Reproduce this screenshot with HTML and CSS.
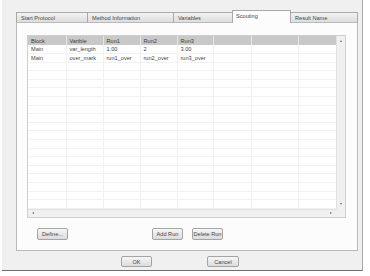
FILE: index.html
```html
<!DOCTYPE html>
<html lang="en">

<head>
  <meta charset="UTF-8" />
  <title>Scouting</title>
  <link rel="stylesheet" href="styles.css">
</head>

<body>
  <div class="dialog">
    <div class="tabs">
      <div class="tab tab-start">Start Protocol</div>
      <div class="tab tab-method">Method Information</div>
      <div class="tab tab-vars">Variables</div>
      <div class="tab tab-scout active">Scouting</div>
      <div class="tab tab-result">Result Name</div>
    </div>

    <div class="panel">
      <div class="grid-box">
        <div class="grid-view">
          <table class="grid" id="runGrid">
            <colgroup>
              <col style="width:38px">
              <col style="width:37px">
              <col style="width:37px">
              <col style="width:37px">
              <col style="width:36px">
              <col style="width:38px">
              <col style="width:47px">
              <col style="width:40px">
            </colgroup>
            <thead>
              <tr>
                <th>Block</th>
                <th>Varible</th>
                <th>Run1</th>
                <th>Run2</th>
                <th>Run3</th>
                <th></th>
                <th></th>
                <th></th>
              </tr>
            </thead>
            <tbody>
              <tr>
                <td>Main</td>
                <td>var_length</td>
                <td>1.00</td>
                <td>2</td>
                <td>3.00</td>
                <td></td>
                <td></td>
                <td></td>
              </tr>
              <tr>
                <td>Main</td>
                <td>over_mark</td>
                <td>run1_over</td>
                <td>run2_over</td>
                <td>run3_over</td>
                <td></td>
                <td></td>
                <td></td>
              </tr>
            </tbody>
          </table>
        </div>
        <div class="vscroll">
          <span class="arrow up"></span>
          <span class="arrow down"></span>
        </div>
        <div class="hscroll">
          <span class="arrow left"></span>
          <span class="arrow right"></span>
        </div>
        <div class="corner"></div>
      </div>

      <div class="panel-buttons">
        <button class="btn">Define...</button>
        <div class="run-buttons">
          <button class="btn">Add Run</button>
          <button class="btn">Delete Run</button>
        </div>
      </div>
    </div>

    <div class="footer">
      <button class="btn btn-ok">OK</button>
      <button class="btn btn-cancel">Cancel</button>
    </div>
  </div>

  <script>
    // fill the rest of the grid with empty rows
    var body = document.querySelector("#runGrid tbody");
    for (var i = 0; i < 20; i++) {
      var row = document.createElement("tr");
      for (var j = 0; j < 8; j++) {
        row.appendChild(document.createElement("td"));
      }
      body.appendChild(row);
    }
  </script>
</body>

</html>
```

FILE: styles.css
```css
body {
  margin: 0;
  background-color: #ffffff;
  font-family: "Liberation Sans", Arial, sans-serif;
  font-size: 5.6px;
  color: #444;
}

.dialog {
  width: 361px;
  height: 271px;
  margin-left: 2px;
  background-color: #f0f0f0;
  border-right: 1px solid #a8a8a8;
  border-bottom: 1px solid #6f6f6f;
  box-sizing: border-box;
  padding: 10px 0 0 14px;
}

.tabs {
  display: flex;
  align-items: flex-end;
  height: 12px;
}

.tab {
  box-sizing: border-box;
  height: 10px;
  padding: 1px 0 0 4px;
  line-height: 8px;
  background: linear-gradient(#f2f2f2, #dedede);
  border: 1px solid #a9a9a9;
  border-bottom: none;
  margin-right: -1px;
}

.tab-start {
  width: 72px;
}

.tab-method {
  width: 87px;
}

.tab-vars {
  width: 60px;
}

.tab-scout {
  width: 59px;
}

.tab-result {
  width: 68px;
}

.tab.active {
  height: 13px;
  margin-bottom: -1px;
  padding-top: 1px;
  padding-left: 3px;
  background: #fcfcfc;
  position: relative;
  z-index: 1;
}

.panel {
  box-sizing: border-box;
  width: 342px;
  height: 229px;
  background-color: #fcfcfc;
  border: 1px solid #b9b9b9;
  padding: 12px 11px 0 10px;
}

.grid-box {
  box-sizing: border-box;
  height: 183px;
  border: 1px solid #cfcfcf;
  background-color: #ffffff;
  display: grid;
  grid-template-columns: 1fr 9px;
  grid-template-rows: 1fr 8px;
}

.grid-view {
  overflow: hidden;
}

.grid {
  table-layout: fixed;
  border-collapse: collapse;
  width: 310px;
}

.grid th,
.grid td {
  padding: 0 0 0 3px;
  text-align: left;
  font-weight: normal;
  white-space: nowrap;
  overflow: hidden;
}

.grid th {
  height: 9px;
  background-color: #c8c8c8;
  border-right: 1px solid #e6e6e6;
  color: #3a3a3a;
}

.grid td {
  height: 8.6px;
  box-sizing: border-box;
  border-right: 1px solid #f1f1f1;
  border-bottom: 1px solid #f1f1f1;
}

.vscroll,
.hscroll,
.corner {
  background-color: #f0f0f0;
  position: relative;
}

.vscroll {
  border-left: 1px solid #e2e2e2;
}

.hscroll {
  border-top: 1px solid #e2e2e2;
}

.arrow {
  position: absolute;
  width: 0;
  height: 0;
  border: 1.5px solid transparent;
}

.arrow.up {
  top: 3px;
  left: 2.5px;
  border-bottom: 2px solid #707070;
}

.arrow.down {
  bottom: 3px;
  left: 2.5px;
  border-top: 2px solid #707070;
}

.arrow.left {
  top: 2px;
  left: 3px;
  border-right: 2px solid #707070;
}

.arrow.right {
  top: 2px;
  right: 3px;
  border-left: 2px solid #707070;
}

.panel-buttons {
  display: flex;
  margin-top: 10px;
  padding-left: 10px;
}

.run-buttons {
  display: flex;
  gap: 9px;
  margin-left: 84px;
}

.btn {
  box-sizing: border-box;
  width: 31px;
  height: 12px;
  padding: 0;
  font-family: "Liberation Sans", Arial, sans-serif;
  font-size: 5.6px;
  color: #444;
  background: linear-gradient(#f6f6f6, #dcdcdc);
  border: 1px solid #a4a4a4;
  border-radius: 2px;
}

.footer {
  display: flex;
  margin-top: 5px;
  padding-left: 105px;
}

.btn-ok {
  height: 11px;
}

.btn-cancel {
  width: 32px;
  height: 11px;
  margin-left: 55px;
}
```
